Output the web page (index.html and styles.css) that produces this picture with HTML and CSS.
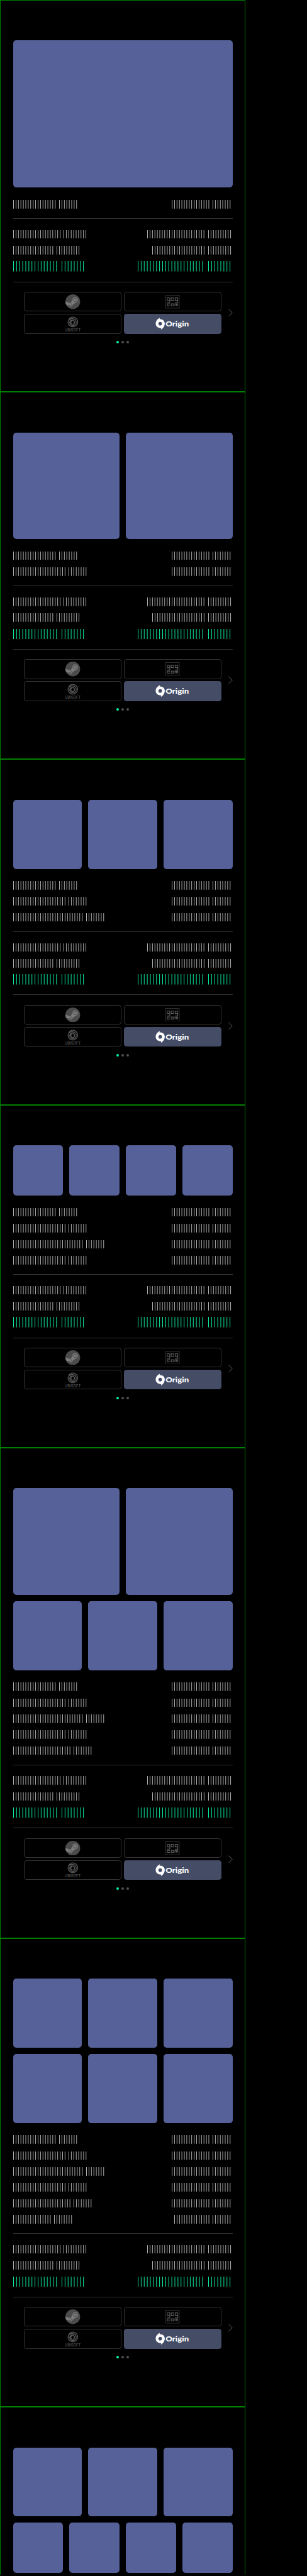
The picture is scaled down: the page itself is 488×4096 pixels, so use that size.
FILE: index.html
```html
<!DOCTYPE html>
<html lang="en">
<head>
<meta charset="utf-8">
<title>Checkout cards</title>
<link rel="stylesheet" href="styles.css">
</head>
<body>
<main id="page" class="page"></main>
<script src="cards.js"></script>
</body>
</html>
```

FILE: styles.css
```css
html, body {
  margin: 0;
  background: #000;
  font-family: Inter, "Liberation Sans", sans-serif;
}
.page { zoom: 0.9753; width: 500px; }
.card {
  box-sizing: border-box;
  width: 400px;
  padding: 65px 20px 78px;
  border: 1px solid #008000;
}
.card.open { padding-bottom: 3px; border-bottom: 0; }
.tiles { display: flex; flex-direction: column; gap: 10px; }
.tile-row { display: flex; gap: 10px; }
.tile { flex: 1; aspect-ratio: 1; border-radius: 5px; background: #576199; }
.tile.wide { aspect-ratio: auto; height: 240px; }
.list { display: flex; flex-direction: column; gap: 12px; padding: 20px 0 16px; border-bottom: 1px solid #333; }
.totals { padding-top: 18px; }
.line { display: flex; justify-content: space-between; height: 14px; color: #b4b4b4; }
.line.sum { height: 17px; margin-top: -1px; color: #0af0a4; }
.bars { display: flex; gap: 3px; }
.sum .bars { gap: 4px; }
.bars svg { display: block; height: 100%; }
.stores { display: grid; grid-template-columns: 322px 7px; justify-content: end; gap: 11px; align-items: center; padding-top: 16px; }
.options { display: grid; grid-template-columns: 1fr 1fr; grid-auto-rows: 32px; gap: 4px; }
.option {
  display: flex;
  align-items: center;
  justify-content: center;
  box-sizing: border-box;
  border: 1px solid #333;
  border-radius: 4px;
}
.option.active { background: #444c66; border-color: #444c66; }
.steam { width: 24px; height: 24px; margin-left: 1px; }
.gog { width: 23px; height: 22px; }
.ubisoft { width: 28px; height: 25px; overflow: visible; }
.origin { width: 55px; height: 20px; margin-left: -1px; overflow: visible; }
.ubisoft-word { font: 500 6.4px Inter, sans-serif; fill: #5a5a5a; }
.origin-word { font: 900 12.2px Lato, sans-serif; fill: #fff; }
.arrow { width: 7px; height: 13px; fill: none; stroke: #606060; }
.dots { display: flex; justify-content: center; gap: 4px; padding-top: 12px; }
.dot { width: 4px; height: 4px; border-radius: 50%; background: #505050; }
.dot.on { background: #0af0a4; }
```

FILE: cards.js
```js
// Tiles per row for each card.
const cards = [[1], [2], [3], [4], [2, 3], [3, 3], [3, 4]];

// Bar counts of the two words on each side of a line: [left, right].
const items = [
  [[18, 8], [16, 8]],
  [[22, 8], [16, 8]],
  [[29, 8], [16, 8]],
  [[22, 8], [16, 8]],
  [[24, 8], [16, 8]],
  [[16, 8], [15, 8]]
];
const totals = [
  [[20, 10], [24, 10]],
  [[17, 10], [22, 10]]
];
const sum = [[15, 8], [22, 8]];

const logos = {
  steam: `<svg class="steam" viewBox="0 0 24 24">
    <circle cx="12" cy="12" r="12" fill="#4b4b4b"/>
    <path d="M0 11.6 8 14.6 11.8 8.6 17 13.3 11.7 17.3 7.8 19.3 .9 16.6Q0 14.3 0 11.6Z" fill="#7b7b7b"/>
    <circle cx="16" cy="9" r="4.6" fill="#7b7b7b"/>
    <circle cx="16" cy="9" r="2.9" fill="none" stroke="#4b4b4b" stroke-width="1"/>
    <circle cx="8.4" cy="16.7" r="3.2" fill="#7b7b7b"/>
    <path d="M5.7 17.6 7.8 18.4A2 2 0 0 0 9.3 14.8L7.4 14" fill="none" stroke="#4b4b4b" stroke-width=".8"/>
  </svg>`,
  gog: `<svg class="gog" viewBox="0 0 23 22">
    <rect x=".5" y=".5" width="22" height="21" fill="none" stroke="#303030"/>
    <path d="M7.1 8.9H2.8V4.7H7.1V12.6H2.2M9.4 4.7H13.6V8.9H9.4ZM20.1 8.9H15.9V4.7H20.1V12.6H15.3M7.3 14.5H2.8V17.8H7.3M9.4 14.5H13.6V17.8H9.4ZM15.5 18.3V14.5H20.1V18.3M17.8 14.5V18.3" fill="none" stroke="#5a5a5a" stroke-width="1.15"/>
  </svg>`,
  ubisoft: `<svg class="ubisoft" viewBox="0 0 28 25">
    <g fill="none" stroke="#585858" stroke-width="1.4">
      <path d="M7.2 6.2C8.6 2.6 11.3 1.2 14.2 1.2A7.9 7.9 0 1 1 6.5 11.2C5.7 6.7 9.2 3.5 13 3.6C17.1 3.6 19.8 6.5 19.6 9.8"/>
      <path d="M19.6 9.8A5.3 5.3 0 0 1 9.1 10.8C8.7 7.9 10.9 6 13.3 6.2C15.3 6.3 16.8 7.8 16.8 9.8A3 3 0 1 1 13 7.1"/>
    </g>
    <text x="1" y="24.4" textLength="26" lengthAdjust="spacingAndGlyphs" class="ubisoft-word">UBISOFT</text>
  </svg>`,
  origin: `<svg class="origin" viewBox="0 0 55 20">
    <path fill="#fff" fill-rule="evenodd" d="M7.5 .2C6.9 1.2 6.8 1.9 7 2.7C12.3 2.4 15.2 5.8 15.3 9.8C15.3 14.2 12 18.2 8.9 19.7C9.5 18.7 9.6 17.8 9.3 17.1C3.8 17.3 .5 13.9 .5 9.8C.5 5.4 3.5 2.2 7.5 .2ZM7.9 7A2.9 2.9 0 1 0 7.9 12.8A2.9 2.9 0 1 0 7.9 7Z"/>
    <text x="16.6" y="14.2" textLength="38" lengthAdjust="spacingAndGlyphs" class="origin-word">Origin</text>
  </svg>`
};

const word = (count, pitch, height) => {
  const w = count * pitch;
  return `<svg width="${w}" viewBox="0 0 ${w} ${height}"><path d="M0 ${height / 2}H${w}" stroke="currentColor" stroke-width="${height}" stroke-dasharray="1 ${pitch - 1}"/></svg>`;
};
const line = (sides, pitch = 4, height = 14, extra = "") =>
  `<div class="line ${extra}">${sides.map(side =>
    `<div class="bars">${side.map(n => word(n, pitch, height)).join("")}</div>`).join("")}</div>`;

const option = (name, extra = "") => `<div class="option ${extra}">${logos[name]}</div>`;

const details = count => `
    <div class="list">${items.slice(0, count).map(s => line(s)).join("")}</div>
    <div class="list totals">${totals.map(s => line(s)).join("")}${line(sum, 5, 17, "sum")}</div>
    <div class="stores">
      <div class="options">${option("steam")}${option("gog")}${option("ubisoft")}${option("origin", "active")}</div>
      <svg class="arrow" viewBox="0 0 7 13"><path d="M.4 .5 6.4 6.5 .4 12.5"/></svg>
    </div>
    <div class="dots"><i class="dot on"></i><i class="dot"></i><i class="dot"></i></div>`;

// The last card shows its tiles only.
const card = (rows, index) => {
  const last = index === cards.length - 1;
  const count = rows.reduce((a, b) => a + b, 0);
  const tiles = rows.map(n =>
    `<div class="tile-row">${`<div class="tile${n === 1 ? " wide" : ""}"></div>`.repeat(n)}</div>`).join("");
  return `<section class="card${last ? " open" : ""}"><div class="tiles">${tiles}</div>${last ? "" : details(count)}</section>`;
};

document.getElementById("page").innerHTML = cards.map(card).join("");
```
